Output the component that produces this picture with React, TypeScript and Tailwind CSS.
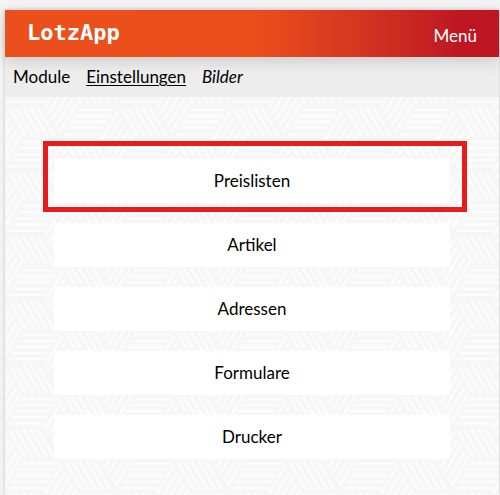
import React from "react";

interface ILink {
  name: string;
  className: string;
}

const crumbs: ILink[] = [
  { name: "Module", className: "" },
  { name: "Einstellungen", className: "underline underline-offset-2" },
  { name: "Bilder", className: "italic" },
];

const entries: string[] = [
  "Preislisten",
  "Artikel",
  "Adressen",
  "Formulare",
  "Drucker",
];

// one hexagon made of three striped rhombs, centred on 0,0
const Hexagon: React.FC<{ x: number; y: number }> = ({ x, y }) => (
  <g transform={`translate(${x} ${y})`}>
    {[0, 1, 2, 3, 4].map((i) => {
      const t = 0.12 + i * 0.19;
      const dx = 18.7 * t;
      const dy = 32.15 * t;
      return (
        <g key={i}>
          <line x1={-36.5 + dx} y1={-dy} x2={dx} y2={-dy} />
          <line x1={-37.3 + 37.3 * t} y1={2} x2={-20.7 + 37.3 * t} y2={30} />
          <line x1={dx + 1} y1={dy - 2} x2={dx + 17.7} y2={dy - 30} />
        </g>
      );
    })}
  </g>
);

const Backdrop: React.FC = () => (
  <svg className="absolute inset-0 size-full" aria-hidden="true">
    <defs>
      <pattern
        id="weave"
        x="-19"
        y="41"
        width="112"
        height="64.3"
        patternUnits="userSpaceOnUse"
      >
        <g stroke="#fcfcfc" strokeWidth="2.8">
          <Hexagon x={0} y={0} />
          <Hexagon x={112} y={0} />
          <Hexagon x={0} y={64.3} />
          <Hexagon x={112} y={64.3} />
          <Hexagon x={56} y={32.15} />
        </g>
      </pattern>
    </defs>
    <rect width="100%" height="100%" fill="url(#weave)" />
  </svg>
);

export default function App() {
  return (
    <div className="min-h-screen flex flex-col bg-[#f4f4f4] pt-2.5 pl-[5px] pr-px font-[Lato,sans-serif] text-[17px] leading-6 text-black">
      <div className="flex flex-col flex-grow shadow-[0_0_4px_rgba(0,0,0,0.2)]">
        <header className="relative h-[47px] px-[22px] flex justify-between items-center bg-linear-to-r from-[#eb4f1b] from-50% to-[#be1622] to-92% text-white shadow-[0_4px_14px_rgba(0,0,0,0.15)]">
          <h1 className="pb-0.5 font-['DejaVu_Sans_Mono',monospace] text-[22px] leading-6 font-bold">
            LotzApp
          </h1>
          <button type="button" className="pt-1">
            Menü
          </button>
        </header>
        <nav className="h-10 px-2 flex items-center gap-4 bg-[#ededed]">
          {crumbs.map((crumb) => (
            <a key={crumb.name} href="#" className={crumb.className}>
              {crumb.name}
            </a>
          ))}
        </nav>
        <main className="relative flex-grow bg-[#f6f6f6] px-[38px] pt-11 pb-9">
          <Backdrop />
          <div className="relative flex flex-col gap-5">
            {entries.map((entry, index) => (
              <div
                key={entry}
                className={
                  index === 0
                    ? "-mb-[9px] -mr-[6px] border-5 border-[#e81c1c] pt-[13px] pb-1 pl-[6px] pr-3"
                    : "px-[11px]"
                }
              >
                <button type="button" className="block w-full h-11 bg-white">
                  {entry}
                </button>
              </div>
            ))}
          </div>
        </main>
      </div>
    </div>
  );
}
